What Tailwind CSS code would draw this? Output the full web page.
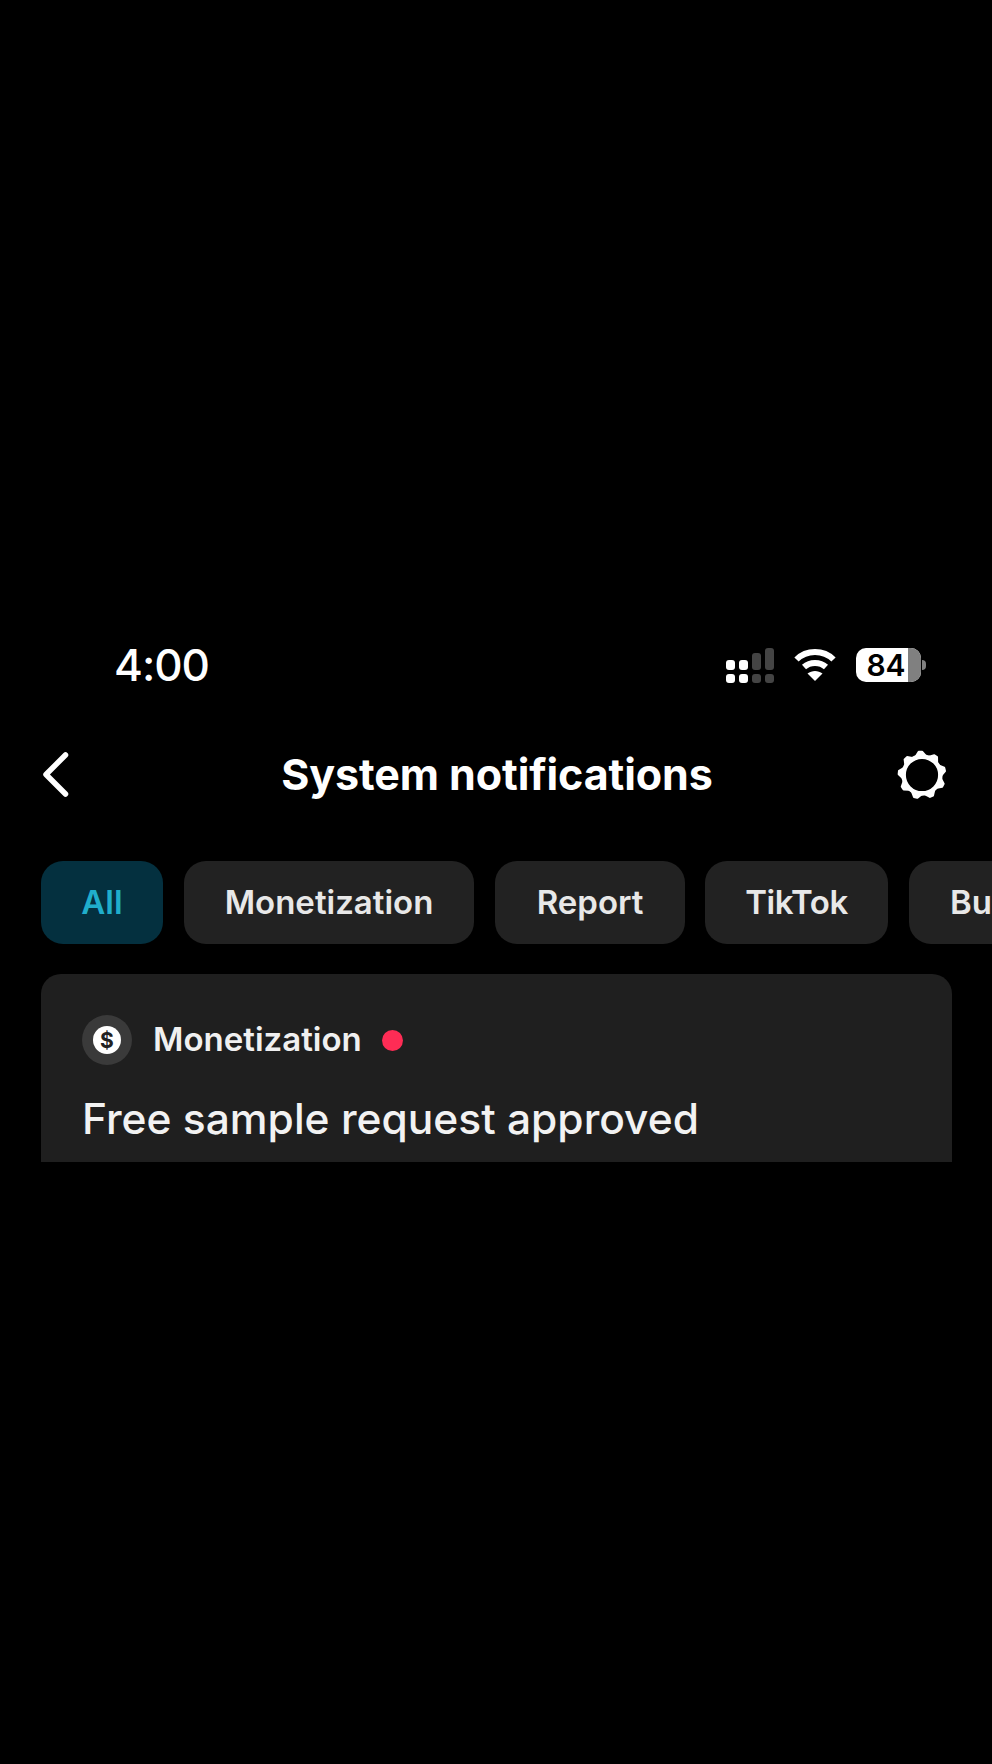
<!DOCTYPE html>
<html><head><meta charset="utf-8">
<script src="https://cdn.jsdelivr.net/npm/@tailwindcss/browser@4"></script>
</head>
<body class="bg-black">
<div class="w-[992px] h-[1764px] bg-black overflow-hidden font-['Inter',sans-serif] text-white pt-[636px]">
  <!-- status bar -->
  <div class="h-[58px] flex items-center justify-between pl-[114px] pr-[66px]">
    <span class="text-[44px] leading-none font-medium tracking-[-1px]">4:00</span>
    <div class="flex items-center">
      <svg width="50" height="36" viewBox="0 0 50 36" class="mt-[2px]">
        <g fill="#fff"><rect x="1" y="12" width="9" height="10" rx="3"/><rect x="14" y="12" width="9" height="10" rx="3"/><rect x="1" y="26" width="9" height="9" rx="3"/><rect x="14" y="26" width="9" height="9" rx="3"/></g>
        <g fill="#444"><rect x="27" y="5" width="9" height="17" rx="3"/><rect x="40" y="0" width="9" height="22" rx="3"/><rect x="27" y="26" width="9" height="9" rx="3"/><rect x="40" y="26" width="9" height="9" rx="3"/></g>
      </svg>
      <svg width="42" height="34" viewBox="0 0 42 34" fill="none" stroke="#fff" stroke-width="6" class="ml-[19px]">
        <path d="M2.500 11.500C12.500 1.500 29.500 1.500 39.500 11.500"/>
        <path d="M10 19C16 13.500 26 13.500 32 19"/>
        <path d="M21 33L13.500 25.500C18 22 24 22 28.500 25.500Z" fill="#fff" stroke="none"/>
      </svg>
      <div class="ml-[20px] flex items-center gap-[1px]">
        <div class="relative w-[65px] h-[34px] rounded-[10px] bg-white overflow-hidden flex items-center justify-center pr-[5px]">
          <div class="absolute right-0 inset-y-0 w-[13px] bg-[#808080]"></div>
          <span class="relative text-[30px] leading-none font-semibold text-black">84</span>
        </div>
        <div class="w-[4px] h-[10px] rounded-r-full bg-[#808080]"></div>
      </div>
    </div>
  </div>
  <!-- header -->
  <div class="mt-[51px] h-[60px] flex items-center justify-between pl-[42px] pr-[43px]">
    <div class="w-[57px]">
      <svg width="30" height="46" viewBox="0 0 30 46" fill="none" stroke="#fff" stroke-width="5.500" stroke-linecap="round" stroke-linejoin="round"><path d="M23.500 3L4 22.500L23.500 42"/></svg>
    </div>
    <h1 class="text-[43px] leading-none font-bold pb-[2px] tracking-[-0.1px]">System notifications</h1>
    <svg width="54" height="54" viewBox="-25 -25 50 50" fill="#fff" stroke="#fff" stroke-width="2" stroke-linejoin="round">
      <circle r="17" fill="none" stroke-width="4.200"/>
      <path d="M-4.500 -17.500L-1.500 -21.500L1.500 -21.500L4.500 -17.500Z" transform="rotate(-4)"/>
      <path d="M-4.500 -17.500L-1.500 -21.500L1.500 -21.500L4.500 -17.500Z" transform="rotate(36)"/>
      <path d="M-4.500 -17.500L-1.500 -21.500L1.500 -21.500L4.500 -17.500Z" transform="rotate(76)"/>
      <path d="M-4.500 -17.500L-1.500 -21.500L1.500 -21.500L4.500 -17.500Z" transform="rotate(116)"/>
      <path d="M-4.500 -17.500L-1.500 -21.500L1.500 -21.500L4.500 -17.500Z" transform="rotate(156)"/>
      <path d="M-4.500 -17.500L-1.500 -21.500L1.500 -21.500L4.500 -17.500Z" transform="rotate(196)"/>
      <path d="M-4.500 -17.500L-1.500 -21.500L1.500 -21.500L4.500 -17.500Z" transform="rotate(236)"/>
      <path d="M-4.500 -17.500L-1.500 -21.500L1.500 -21.500L4.500 -17.500Z" transform="rotate(276)"/>
      <path d="M-4.500 -17.500L-1.500 -21.500L1.500 -21.500L4.500 -17.500Z" transform="rotate(316)"/>
    </svg>
  </div>
  <!-- chips -->
  <div class="mt-[56px] flex gap-[21px] pl-[41px] text-[33px] font-semibold text-[#e8e8e8]">
    <div class="h-[83px] w-[122px] shrink-0 rounded-[22px] bg-[#04303f] text-[#20aecb] flex items-center justify-center">All</div>
    <div class="h-[83px] w-[290px] shrink-0 rounded-[22px] bg-[#222222] flex items-center justify-center">Monetization</div>
    <div class="h-[83px] w-[190px] shrink-0 rounded-[22px] bg-[#222222] flex items-center justify-center">Report</div>
    <div class="h-[83px] w-[183px] shrink-0 rounded-[22px] bg-[#222222] flex items-center justify-center -ml-[1px] tracking-[-0.5px]">TikTok</div>
    <div class="h-[83px] w-[290px] shrink-0 rounded-[22px] bg-[#222222] pl-[41px] flex items-center">Business</div>
  </div>
  <!-- card -->
  <div class="mt-[30px] ml-[41px] w-[911px] h-[188px] rounded-t-[20px] bg-[#1f1f1f] overflow-hidden pl-[41px] pt-[41px]">
    <div class="flex items-center h-[50px]">
      <div class="w-[50px] h-[50px] rounded-full bg-[#3a3a3a] flex items-center justify-center">
        <div class="w-[28px] h-[28px] rounded-full bg-white flex items-center justify-center text-[21px] leading-none font-bold text-[#222]">$</div>
      </div>
      <span class="ml-[21px] text-[33px] font-semibold text-[#f0f0f0]">Monetization</span>
      <span class="ml-[20px] w-[21px] h-[21px] rounded-full bg-[#fe2c55]"></span>
    </div>
    <p class="mt-[29px] text-[42.500px] leading-[50px] font-medium text-[#f2f2f2]">Free sample request approved</p>
  </div>
</div>
</body></html>
